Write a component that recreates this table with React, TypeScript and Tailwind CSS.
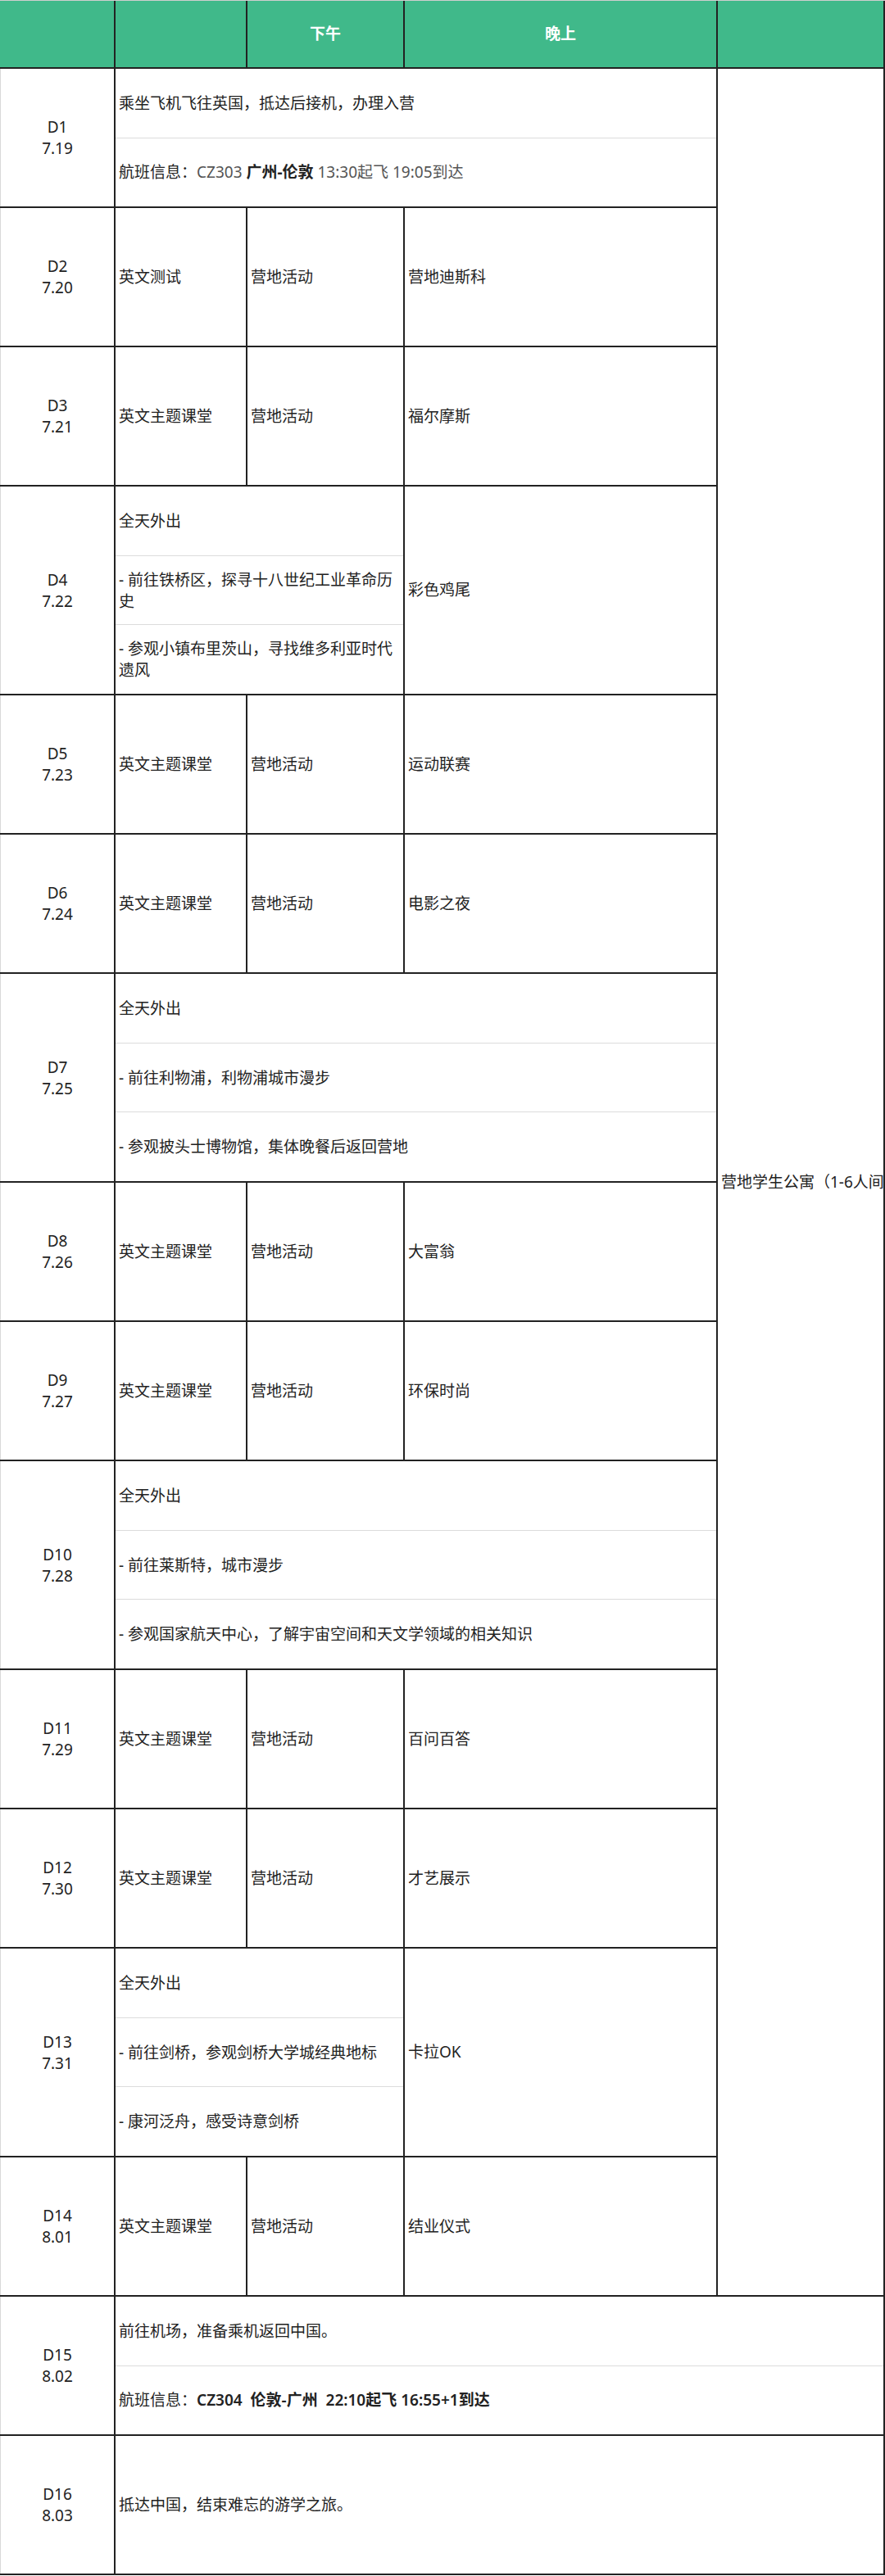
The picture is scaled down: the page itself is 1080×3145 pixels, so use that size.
import React from 'react';

type Day = {
  d: string;
  date: string;
} & (
  | { kind: 'plain'; am: string; pm: string; eve: string }
  | { kind: 'wide'; lines: React.ReactNode[] }
  | { kind: 'outing'; lines: string[]; eve: string }
);

const days: Day[] = [
  {
    d: 'D1',
    date: '7.19',
    kind: 'wide',
    lines: [
      '乘坐飞机飞往英国，抵达后接机，办理入营',
      <>
        航班信息：<span className="text-[#555]">CZ303 </span>
        <span className="font-bold">广州-伦敦</span>
        <span className="text-[#555]"> 13:30起飞 19:05到达</span>
      </>,
    ],
  },
  { d: 'D2', date: '7.20', kind: 'plain', am: '英文测试', pm: '营地活动', eve: '营地迪斯科' },
  { d: 'D3', date: '7.21', kind: 'plain', am: '英文主题课堂', pm: '营地活动', eve: '福尔摩斯' },
  {
    d: 'D4',
    date: '7.22',
    kind: 'outing',
    lines: ['全天外出', '- 前往铁桥区，探寻十八世纪工业革命历史', '- 参观小镇布里茨山，寻找维多利亚时代遗风'],
    eve: '彩色鸡尾',
  },
  { d: 'D5', date: '7.23', kind: 'plain', am: '英文主题课堂', pm: '营地活动', eve: '运动联赛' },
  { d: 'D6', date: '7.24', kind: 'plain', am: '英文主题课堂', pm: '营地活动', eve: '电影之夜' },
  {
    d: 'D7',
    date: '7.25',
    kind: 'wide',
    lines: ['全天外出', '- 前往利物浦，利物浦城市漫步', '- 参观披头士博物馆，集体晚餐后返回营地'],
  },
  { d: 'D8', date: '7.26', kind: 'plain', am: '英文主题课堂', pm: '营地活动', eve: '大富翁' },
  { d: 'D9', date: '7.27', kind: 'plain', am: '英文主题课堂', pm: '营地活动', eve: '环保时尚' },
  {
    d: 'D10',
    date: '7.28',
    kind: 'wide',
    lines: ['全天外出', '- 前往莱斯特，城市漫步', '- 参观国家航天中心，了解宇宙空间和天文学领域的相关知识'],
  },
  { d: 'D11', date: '7.29', kind: 'plain', am: '英文主题课堂', pm: '营地活动', eve: '百问百答' },
  { d: 'D12', date: '7.30', kind: 'plain', am: '英文主题课堂', pm: '营地活动', eve: '才艺展示' },
  {
    d: 'D13',
    date: '7.31',
    kind: 'outing',
    lines: ['全天外出', '- 前往剑桥，参观剑桥大学城经典地标', '- 康河泛舟，感受诗意剑桥'],
    eve: '卡拉OK',
  },
  { d: 'D14', date: '8.01', kind: 'plain', am: '英文主题课堂', pm: '营地活动', eve: '结业仪式' },
];

function DayCell({ d, date }: { d: string; date: string }) {
  return (
    <div className="w-[141px] shrink-0 border-l border-l-[#d9d9d9] border-r-2 border-r-[#222] flex flex-col items-center justify-center leading-[26px]">
      <span>{d}</span>
      <span>{date}</span>
    </div>
  );
}

// stacked sub rows inside a merged cell, light dividers between them
function SubRows({ lines, className }: { lines: React.ReactNode[]; className: string }) {
  return (
    <div className={`flex flex-col border-r-2 border-r-[#222] ${className}`}>
      {lines.map((line, i) => (
        <div
          key={i}
          className={`flex-1 flex items-center pl-1 pr-1 leading-[26px] ${
            i < lines.length - 1 ? 'border-b border-b-[#dcdcdc]' : ''
          }`}
        >
          <div>{line}</div>
        </div>
      ))}
    </div>
  );
}

function TextCell({ text, className }: { text: string; className: string }) {
  return (
    <div className={`flex items-center pl-1 border-r-2 border-r-[#222] ${className}`}>{text}</div>
  );
}

function DayRow({ day }: { day: Day }) {
  const tall = day.kind !== 'plain' && day.lines.length === 3;
  return (
    <div className={`flex border-b-2 border-b-[#222] ${tall ? 'h-[255px]' : 'h-[170px]'}`}>
      <DayCell d={day.d} date={day.date} />
      {day.kind === 'plain' && (
        <>
          <TextCell text={day.am} className="w-[161px]" />
          <TextCell text={day.pm} className="w-[192px]" />
          <TextCell text={day.eve} className="w-[382px]" />
        </>
      )}
      {day.kind === 'wide' && <SubRows lines={day.lines} className="w-[735px]" />}
      {day.kind === 'outing' && (
        <>
          <SubRows lines={day.lines} className="w-[353px]" />
          <TextCell text={day.eve} className="w-[382px]" />
        </>
      )}
    </div>
  );
}

export default function App() {
  return (
    <div
      className="w-[1080px] bg-white text-[19px] text-[#222]"
      style={{ fontFamily: '"Noto Sans", "Noto Sans CJK SC", sans-serif' }}
    >
      {/* header */}
      <div className="flex h-[84px] bg-[#40b98a] border-t border-t-[#cfcfcf] border-b-2 border-b-[#222] font-bold text-white">
        <div className="w-[141px] border-r-2 border-r-[#222]" />
        <div className="w-[161px] border-r-2 border-r-[#222]" />
        <div className="w-[192px] border-r-2 border-r-[#222] flex items-center justify-center">下午</div>
        <div className="w-[382px] border-r-2 border-r-[#222] flex items-center justify-center">晚上</div>
        <div className="w-[204px] border-r-2 border-r-[#222]" />
      </div>

      {/* D1 - D14 with the merged lodging column */}
      <div className="flex">
        <div className="w-[876px] flex flex-col">
          {days.map((day) => (
            <DayRow key={day.d} day={day} />
          ))}
        </div>
        <div className="w-[204px] flex items-center pl-1 border-r-2 border-r-[#222] border-b-2 border-b-[#222] overflow-hidden whitespace-nowrap">
          营地学生公寓（1-6人间）
        </div>
      </div>

      {/* D15 */}
      <div className="flex h-[170px] border-b-2 border-b-[#222]">
        <DayCell d="D15" date="8.02" />
        <SubRows
          className="w-[939px]"
          lines={[
            '前往机场，准备乘机返回中国。',
            <>
              航班信息：<span className="font-semibold">CZ304&nbsp; 伦敦-广州&nbsp; 22:10起飞 16:55+1到达</span>
            </>,
          ]}
        />
      </div>

      {/* D16 */}
      <div className="flex h-[170px] border-b-2 border-b-[#222]">
        <DayCell d="D16" date="8.03" />
        <TextCell text="抵达中国，结束难忘的游学之旅。" className="w-[939px]" />
      </div>
    </div>
  );
}
